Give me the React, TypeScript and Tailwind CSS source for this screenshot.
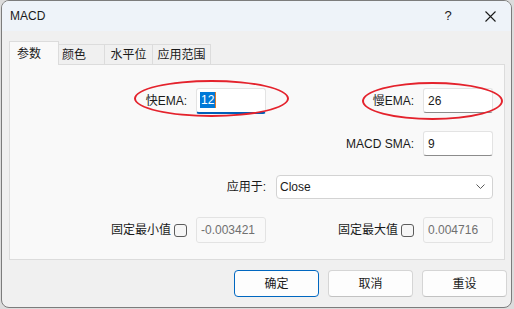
import React from 'react';

const font = { fontFamily: '"Segoe UI", "Liberation Sans", "Noto Sans CJK SC", sans-serif' };

type FieldProps = {
  label: string;
  value: string;
  focused?: boolean;
  disabled?: boolean;
  checkbox?: boolean;
};

const Field: React.FC<FieldProps> = ({ label, value, focused, disabled, checkbox }) => (
  <div className="flex items-center h-full">
    <span className="text-[12px] text-[#1a1a1a] leading-none">{label}</span>
    {checkbox && (
      <span className="ml-[3px] w-[13px] h-[13px] rounded-[3px] border border-[#5c5c5c] bg-[#f6f6f6]" />
    )}
    {disabled ? (
      <div className="ml-[9px] w-[70px] h-[26px] bg-[#f9f9f9] border border-[#e3e3e3] rounded-[3px] flex items-center pl-[4px] text-[12px] text-[#707070]">
        {value}
      </div>
    ) : focused ? (
      <div className="ml-[9px] w-[70px] h-[26px] bg-white border border-[#e3e3e3] border-b-2 border-b-[#005fb8] rounded-[3px] flex items-center pl-[3px]">
        <span className="bg-[#0078d7] text-white text-[12px] leading-[16px] px-[1px]">{value}</span>
        <span className="w-px h-[16px] bg-[#e07b2a]" />
      </div>
    ) : (
      <div className="ml-[9px] w-[70px] h-[25px] bg-white border border-[#e3e3e3] border-b-[#8c8c8c] rounded-[3px] flex items-center pl-[4px] text-[12px] text-[#1a1a1a]">
        {value}
      </div>
    )}
  </div>
);

const tabs = [
  { name: '参数', active: true, cls: 'w-[50px]' },
  { name: '颜色', active: false, cls: 'w-[46px] justify-start pl-[3px]' },
  { name: '水平位', active: false, cls: 'w-[48px] justify-center' },
  { name: '应用范围', active: false, cls: 'w-[58px] justify-center' },
];

const Button: React.FC<{ label: string; primary?: boolean }> = ({ label, primary }) => (
  <button
    className={
      'w-[85px] h-[27px] rounded-[4px] bg-[#fdfdfd] text-[12px] text-[#1a1a1a] border ' +
      (primary ? 'border-[#0067c0]' : 'border-[#d5d5d5] border-b-[#c2c2c2]')
    }
  >
    {label}
  </button>
);

export default function App() {
  return (
    <div className="relative w-[514px] h-[309px] bg-[#dcdcdc] overflow-hidden" style={font}>
      <div className="ml-[1px] w-[511px] h-[308px] rounded-[8px] border border-[#7c7c7c] bg-[#f0f0f0] overflow-hidden flex flex-col">
        {/* title bar */}
        <div className="h-[30px] bg-[#eef3f9] flex items-center pl-[8px] shrink-0">
          <span className="text-[12px] text-[#1a1a1a]">MACD</span>
          <span className="ml-auto text-[13px] text-[#1a1a1a] w-[16px] text-center">?</span>
          <svg className="ml-[29px] mr-[15px]" width="11" height="11" viewBox="0 0 11 11">
            <path d="M0.5 0.5 L10.5 10.5 M10.5 0.5 L0.5 10.5" stroke="#1a1a1a" strokeWidth="1.1" fill="none" />
          </svg>
        </div>

        {/* body */}
        <div className="flex-1 flex flex-col pl-[7px] pr-[6px] pt-[9px]">
          <div className="flex items-end h-[24px]">
            {tabs.map(t =>
              t.active ? (
                <div
                  key={t.name}
                  className={`${t.cls} h-[24px] bg-[#f9f9f9] border border-b-0 border-[#dcdcdc] pl-[7px] pt-[3px] text-[12px] text-[#1a1a1a] relative z-10 -mb-px`}
                >
                  {t.name}
                </div>
              ) : (
                <div
                  key={t.name}
                  className={`${t.cls} h-[20px] bg-[#f0f0f0] border border-b-0 border-l-0 border-[#dcdcdc] flex items-center text-[12px] text-[#1a1a1a]`}
                >
                  {t.name}
                </div>
              )
            )}
          </div>

          {/* tab panel */}
          <div className="w-[496px] h-[196px] bg-[#f9f9f9] border border-[#dcdcdc] pt-[23px] flex flex-col gap-[18px]">
            <div className="flex h-[25px]">
              <div className="w-[256px] flex justify-end">
                <Field label="快EMA:" value="12" focused />
              </div>
              <div className="flex-1 flex justify-end pr-[11px]">
                <Field label="慢EMA:" value="26" />
              </div>
            </div>
            <div className="flex h-[25px]">
              <div className="w-[256px]" />
              <div className="flex-1 flex justify-end pr-[11px]">
                <Field label="MACD SMA:" value="9" />
              </div>
            </div>
            <div className="flex h-[25px] items-center">
              <div className="w-[256px] flex justify-end">
                <span className="text-[12px] text-[#1a1a1a]">应用于:</span>
              </div>
              <div className="ml-[10px] w-[217px] h-[24px] bg-white border border-[#d3d3d3] rounded-[4px] flex items-center pl-[3px] pr-[7px]">
                <span className="text-[12px] text-[#1a1a1a]">Close</span>
                <svg className="ml-auto" width="9" height="5" viewBox="0 0 9 5">
                  <path d="M0.5 0.5 L4.5 4.5 L8.5 0.5" stroke="#5a5a5a" strokeWidth="1" fill="none" />
                </svg>
              </div>
            </div>
            <div className="flex h-[26px]">
              <div className="w-[256px] flex justify-end">
                <Field label="固定最小值" value="-0.003421" disabled checkbox />
              </div>
              <div className="flex-1 flex justify-end pr-[11px]">
                <Field label="固定最大值" value="0.004716" disabled checkbox />
              </div>
            </div>
          </div>

          {/* buttons */}
          <div className="flex justify-end gap-[9px] mt-[10px] mr-[-2px]">
            <Button label="确定" primary />
            <Button label="取消" />
            <Button label="重设" />
          </div>
        </div>
      </div>

      {/* annotation ellipses */}
      <div className="absolute left-[134px] top-[80px] w-[155px] h-[37px] rounded-[50%] border-2 border-[#e4222c]" />
      <div className="absolute left-[362px] top-[82px] w-[141px] h-[38px] rounded-[50%] border-2 border-[#e4222c]" />
    </div>
  );
}
